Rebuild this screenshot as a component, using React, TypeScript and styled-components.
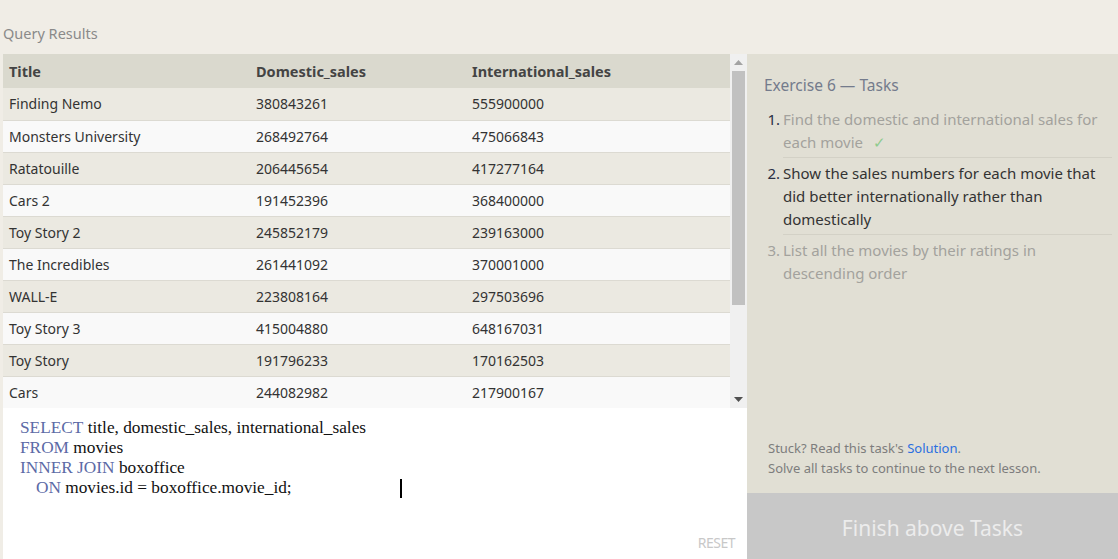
import React from "react";
import styled, { createGlobalStyle } from "styled-components";

const Global = createGlobalStyle`
  html, body { margin: 0; padding: 0; }
  body {
    background: #f0ede6;
    font-family: "Noto Sans", "Open Sans", sans-serif;
    width: 1118px;
    height: 559px;
    overflow: hidden;
  }
`;

const Page = styled.div`
  display: flex;
  flex-direction: column;
  width: 1118px;
  height: 559px;
`;

const Heading = styled.div`
  height: 54px;
  box-sizing: border-box;
  padding: 23px 0 0 3px;
  font-size: 14.5px;
  line-height: 20px;
  color: #8a8a8a;
`;

const Main = styled.div`
  display: flex;
  flex: 1;
  min-height: 0;
`;

const LeftCol = styled.div`
  display: flex;
  flex-direction: column;
  width: 744px;
  margin-left: 3px;
`;

const Results = styled.div`
  display: flex;
  height: 354px;
  background: #f9f9f9;
`;

const TableWrap = styled.div`
  flex: 1;
  overflow: hidden;
`;

const Table = styled.table`
  width: 100%;
  border-collapse: collapse;
  table-layout: fixed;
  font-size: 14px;
  color: #333;
`;

const HeadCell = styled.th<{ $w?: number }>`
  width: ${(p) => (p.$w ? `${p.$w}px` : "auto")};
  height: 34px;
  box-sizing: border-box;
  padding: 0 0 0 6px;
  text-align: left;
  font-weight: 700;
  font-size: 14.5px;
  color: #444;
  background: #dad9ce;
`;

const Row = styled.tr<{ $odd: boolean }>`
  background: ${(p) => (p.$odd ? "#ebe9e1" : "#f9f9f9")};
  border-top: 1px solid #dcdad2;
  &:first-child { border-top: none; }
`;

const Cell = styled.td`
  height: 32px;
  box-sizing: border-box;
  padding: 0 0 0 6px;
  white-space: nowrap;
`;

const Scrollbar = styled.div`
  width: 17px;
  background: #f0f0f0;
  display: flex;
  flex-direction: column;
  align-items: center;
`;

const Arrow = styled.div`
  height: 17px;
  width: 17px;
  display: flex;
  align-items: center;
  justify-content: center;
`;

const Track = styled.div`
  flex: 1;
  width: 100%;
  display: flex;
  justify-content: center;
`;

const Thumb = styled.div`
  width: 13px;
  height: 234px;
  background: #c1c1c1;
`;

const Editor = styled.div`
  flex: 1;
  background: #fff;
  display: flex;
  flex-direction: column;
  padding: 10px 0 0 17px;
  font-family: "Liberation Serif", "DejaVu Serif", serif;
  font-size: 17.3px;
  line-height: 20px;
  color: #111;
`;

const CodeLine = styled.div<{ $indent?: boolean }>`
  padding-left: ${(p) => (p.$indent ? "16px" : "0")};
  white-space: pre;
  display: flex;
  align-items: center;
`;

const Kw = styled.span`
  color: #5c6aa6;
`;

const Caret = styled.span`
  display: inline-block;
  width: 2px;
  height: 19px;
  background: #000;
  margin-left: 108px;
`;

const ResetBar = styled.div`
  margin-top: auto;
  display: flex;
  justify-content: flex-end;
  padding: 0 12px 6px 0;
`;

const Reset = styled.span`
  font-family: "Noto Sans", sans-serif;
  font-size: 14px;
  color: #c8c8c8;
  letter-spacing: -0.5px;
`;

const RightCol = styled.div`
  width: 371px;
  display: flex;
  flex-direction: column;
  background: #e1dfd4;
`;

const TaskArea = styled.div`
  flex: 1;
  display: flex;
  flex-direction: column;
  padding: 21px 6px 0 17px;
`;

const TaskTitle = styled.div`
  font-size: 15.5px;
  line-height: 20px;
  color: #747b8c;
  margin-bottom: 9px;
`;

const TaskList = styled.ol`
  list-style: none;
  margin: 0;
  padding: 0;
`;

const TaskItem = styled.li<{ $tone: "done" | "active" | "todo" }>`
  display: flex;
  font-size: 15px;
  line-height: 23px;
  color: ${(p) => (p.$tone === "active" ? "#333" : "#a3a29d")};
  &:last-child > div:last-child { border-bottom: none; }
`;

const Num = styled.span<{ $dark: boolean }>`
  width: 19px;
  flex: none;
  box-sizing: border-box;
  padding: 4px 3px 0 0;
  text-align: right;
  color: ${(p) => (p.$dark ? "#2a2f45" : "#a3a29d")};
`;

const TaskBody = styled.div`
  flex: 1;
  padding: 4px 0 3px 0;
  border-bottom: 1px solid #d3d1c6;
`;

const Check = styled.span`
  color: #8ecb8e;
  margin-left: 10px;
`;

const Help = styled.div`
  margin-top: auto;
  padding: 0 0 15px 4px;
  font-size: 13px;
  line-height: 20px;
  color: #7d7d7d;
`;

const Link = styled.a`
  color: #2b6fe0;
  text-decoration: none;
`;

const Finish = styled.div`
  height: 66px;
  box-sizing: border-box;
  padding-top: 3px;
  background: #c8c8c8;
  color: #ececec;
  font-size: 21px;
  display: flex;
  align-items: center;
  justify-content: center;
`;

const rows: [string, number, number][] = [
  ["Finding Nemo", 380843261, 555900000],
  ["Monsters University", 268492764, 475066843],
  ["Ratatouille", 206445654, 417277164],
  ["Cars 2", 191452396, 368400000],
  ["Toy Story 2", 245852179, 239163000],
  ["The Incredibles", 261441092, 370001000],
  ["WALL-E", 223808164, 297503696],
  ["Toy Story 3", 415004880, 648167031],
  ["Toy Story", 191796233, 170162503],
  ["Cars", 244082982, 217900167],
];

const Tri = ({ up }: { up: boolean }) => (
  <svg width="9" height="5" viewBox="0 0 9 5">
    <polygon points={up ? "0,5 9,5 4.5,0" : "0,0 9,0 4.5,5"} fill={up ? "#a3a3a3" : "#505050"} />
  </svg>
);

export default function App() {
  return (
    <Page>
      <Global />
      <Heading>Query Results</Heading>
      <Main>
        <LeftCol>
          <Results>
            <TableWrap>
              <Table>
                <thead>
                  <tr>
                    <HeadCell $w={247}>Title</HeadCell>
                    <HeadCell $w={216}>Domestic_sales</HeadCell>
                    <HeadCell>International_sales</HeadCell>
                  </tr>
                </thead>
                <tbody>
                  {rows.map((r, i) => (
                    <Row key={r[0]} $odd={i % 2 === 0}>
                      <Cell>{r[0]}</Cell>
                      <Cell>{r[1]}</Cell>
                      <Cell>{r[2]}</Cell>
                    </Row>
                  ))}
                </tbody>
              </Table>
            </TableWrap>
            <Scrollbar>
              <Arrow>
                <Tri up />
              </Arrow>
              <Track>
                <Thumb />
              </Track>
              <Arrow>
                <Tri up={false} />
              </Arrow>
            </Scrollbar>
          </Results>
          <Editor>
            <CodeLine>
              <Kw>SELECT</Kw> title, domestic_sales, international_sales
            </CodeLine>
            <CodeLine>
              <Kw>FROM</Kw> movies
            </CodeLine>
            <CodeLine>
              <Kw>INNER JOIN</Kw> boxoffice
            </CodeLine>
            <CodeLine $indent>
              <Kw>ON</Kw> movies.id = boxoffice.movie_id;
              <Caret />
            </CodeLine>
            <ResetBar>
              <Reset>RESET</Reset>
            </ResetBar>
          </Editor>
        </LeftCol>
        <RightCol>
          <TaskArea>
            <TaskTitle>Exercise 6 — Tasks</TaskTitle>
            <TaskList>
              <TaskItem $tone="done">
                <Num $dark>1.</Num>
                <TaskBody>
                  Find the domestic and international sales for
                  <br />
                  each movie<Check>✓</Check>
                </TaskBody>
              </TaskItem>
              <TaskItem $tone="active">
                <Num $dark>2.</Num>
                <TaskBody>
                  Show the sales numbers for each movie that
                  <br />
                  did better internationally rather than
                  <br />
                  domestically
                </TaskBody>
              </TaskItem>
              <TaskItem $tone="todo">
                <Num $dark={false}>3.</Num>
                <TaskBody>
                  List all the movies by their ratings in
                  <br />
                  descending order
                </TaskBody>
              </TaskItem>
            </TaskList>
            <Help>
              Stuck? Read this task's <Link href="#">Solution</Link>.
              <br />
              Solve all tasks to continue to the next lesson.
            </Help>
          </TaskArea>
          <Finish>Finish above Tasks</Finish>
        </RightCol>
      </Main>
    </Page>
  );
}
